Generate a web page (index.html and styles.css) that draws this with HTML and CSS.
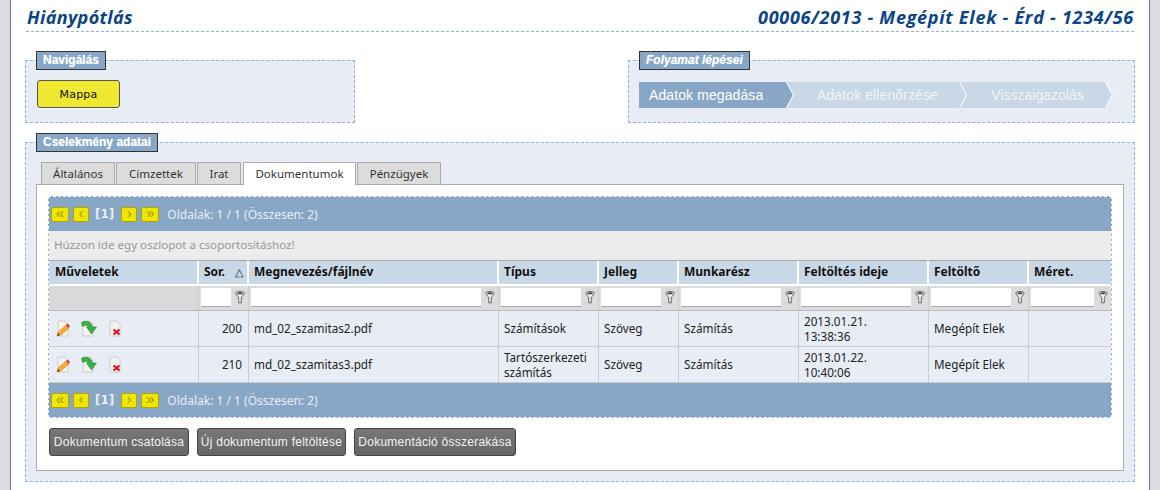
FILE: index.html
```html
<!DOCTYPE html>
<html lang="hu">
<head>
<meta charset="utf-8">
<title>Hiánypótlás</title>
<link rel="stylesheet" href="styles.css">
</head>
<body>
<svg class="defs" width="0" height="0" aria-hidden="true">
  <symbol id="funnel" viewBox="0 0 10 13">
    <path d="M.8 2.200C.8 1 3 .5 5 .5s4.200.5 4.200 1.700L6.300 6.500v5.300L3.700 11.800V6.500z" fill="#f4f4f4" stroke="#555" stroke-width=".9"/>
    <ellipse cx="5" cy="2.300" rx="2.800" ry="1.100" fill="#444"/>
  </symbol>
  <symbol id="edit" viewBox="0 0 16 17">
    <path d="M3 1h7l3 3v12H3z" fill="#f2f2ef" stroke="#c6c6c2" stroke-width=".8"/>
    <path d="M2 16l1-4 8-7 3 3-8 7z" fill="#f2ac34" stroke="#d88818" stroke-width=".5"/>
    <path d="M11 5l1.500-1.500 2.500 2.500L13.500 8z" fill="#e03040"/>
    <path d="M2 16l1-3 2 2z" fill="#5a4020"/>
  </symbol>
  <symbol id="move" viewBox="0 0 16 17">
    <path d="M2 1h7l3 3v12H2z" fill="#f2f2ef" stroke="#c6c6c2" stroke-width=".8"/>
    <path d="M.5 2.500C5 0 10.500 1.500 11.500 7H15.500L10.500 14 5.500 7H7.500C7 5.500 4.500 4.800 1.500 6.500z" fill="#3cb043" stroke="#1f7a28" stroke-width=".5"/>
  </symbol>
  <symbol id="del" viewBox="0 0 16 17">
    <path d="M3 1h7l3 3v12H3z" fill="#f2f2ef" stroke="#c6c6c2" stroke-width=".8"/>
    <path d="M6.500 9.500l6 5m0-5l-6 5" stroke="#e01020" stroke-width="2.200" fill="none"/>
  </symbol>
  <symbol id="step-arrow" viewBox="0 0 8 26" preserveAspectRatio="none">
    <path d="M0 0L7 13 0 26z" fill="currentColor"/>
    <path d="M.5 0L7.500 13 .5 26" fill="none" stroke="#fff" stroke-width="1"/>
  </symbol>
</svg>
<div class="page">
  <header class="head">
    <h1 class="title title-l">Hiánypótlás</h1>
    <h2 class="title title-r">00006/2013 - Megépít Elek - Érd - 1234/56</h2>
  </header>
  <div class="toprow">
    <section class="box box-nav">
      <div class="legend">Navigálás</div>
      <div class="nav-body"><button class="btn-yellow">Mappa</button></div>
    </section>
    <section class="box box-steps">
      <div class="legend legend-i">Folyamat lépései</div>
      <div class="steps">
        <div class="step step-active">Adatok megadása<svg class="chev"><use href="#step-arrow"/></svg></div>
        <div class="step step-two">Adatok ellenőrzése<svg class="chev"><use href="#step-arrow"/></svg></div>
        <div class="step step-three">Visszaigazolás<svg class="chev"><use href="#step-arrow"/></svg></div>
      </div>
    </section>
  </div>
  <section class="box box-main">
    <div class="legend">Cselekmény adatai</div>
    <div class="tabs">
      <div class="tab t1">Általános</div>
      <div class="tab t2">Címzettek</div>
      <div class="tab t3">Irat</div>
      <div class="tab t4 tab-active">Dokumentumok</div>
      <div class="tab t5">Pénzügyek</div>
    </div>
    <div class="panel">
      <div class="grid">
        <div class="pager">
          <span class="pg pg-w">«</span><span class="pg">‹</span><b class="cur">[1]</b><span class="pg">›</span><span class="pg pg-w">»</span>
          <span class="pinfo">Oldalak: 1 / 1 (Összesen: 2)</span>
        </div>
        <div class="group">Húzzon ide egy oszlopot a csoportosításhoz!</div>
        <table class="tbl">
          <colgroup>
            <col class="c1"><col class="c2"><col class="c3"><col class="c4"><col class="c5"><col class="c6"><col class="c7"><col class="c8"><col class="c9">
          </colgroup>
          <thead>
            <tr class="hr">
              <th>Műveletek</th><th>Sor. <span class="sort">△</span></th><th>Megnevezés/fájlnév</th><th>Típus</th><th>Jelleg</th><th>Munkarész</th><th>Feltöltés ideje</th><th>Feltöltő</th><th>Méret.</th>
            </tr>
            <tr class="fr">
              <td class="f0"></td>
              <td><div class="ff"><span class="fi"></span><svg class="fn"><use href="#funnel"/></svg></div></td>
              <td><div class="ff"><span class="fi"></span><svg class="fn"><use href="#funnel"/></svg></div></td>
              <td><div class="ff"><span class="fi"></span><svg class="fn"><use href="#funnel"/></svg></div></td>
              <td><div class="ff"><span class="fi"></span><svg class="fn"><use href="#funnel"/></svg></div></td>
              <td><div class="ff"><span class="fi"></span><svg class="fn"><use href="#funnel"/></svg></div></td>
              <td><div class="ff"><span class="fi"></span><svg class="fn"><use href="#funnel"/></svg></div></td>
              <td><div class="ff"><span class="fi"></span><svg class="fn"><use href="#funnel"/></svg></div></td>
              <td><div class="ff"><span class="fi"></span><svg class="fn"><use href="#funnel"/></svg></div></td>
            </tr>
          </thead>
          <tbody>
            <tr class="dr">
              <td><div class="acts"><svg class="ic"><use href="#edit"/></svg><svg class="ic"><use href="#move"/></svg><svg class="ic"><use href="#del"/></svg></div></td>
              <td class="num">200</td><td>md_02_szamitas2.pdf</td><td>Számítások</td><td>Szöveg</td><td>Számítás</td><td>2013.01.21.<br>13:38:36</td><td>Megépít Elek</td><td></td>
            </tr>
            <tr class="dr">
              <td><div class="acts"><svg class="ic"><use href="#edit"/></svg><svg class="ic"><use href="#move"/></svg><svg class="ic"><use href="#del"/></svg></div></td>
              <td class="num">210</td><td>md_02_szamitas3.pdf</td><td>Tartószerkezeti<br>számítás</td><td>Szöveg</td><td>Számítás</td><td>2013.01.22.<br>10:40:06</td><td>Megépít Elek</td><td></td>
            </tr>
          </tbody>
        </table>
        <div class="pager">
          <span class="pg pg-w">«</span><span class="pg">‹</span><b class="cur">[1]</b><span class="pg">›</span><span class="pg pg-w">»</span>
          <span class="pinfo">Oldalak: 1 / 1 (Összesen: 2)</span>
        </div>
      </div>
      <div class="actions">
        <button class="btn-gray b1">Dokumentum csatolása</button>
        <button class="btn-gray b2">Új dokumentum feltöltése</button>
        <button class="btn-gray b3">Dokumentáció összerakása</button>
      </div>
    </div>
  </section>
</div>
</body>
</html>
```
FILE: styles.css
```css
* { box-sizing: border-box; }
html, body { margin: 0; padding: 0; height: 490px; overflow: hidden; }
body { background: #dcdce0; font: 11.7px "Noto Sans", sans-serif; color: #222; }
.defs { position: absolute; }
.page {
  margin-left: 10px; width: 1140px; height: 490px; background: #fff;
  border-left: 1px solid #5d7a9c; border-right: 1px solid #5d7a9c;
  padding: 0 14px;
}
.head {
  display: flex; justify-content: space-between; align-items: flex-end;
  height: 32px; margin: 0 1px 0 1px; padding: 0 0 2px 1px;
  border-bottom: 1px dashed #8fb3d6;
}
.title { margin: 0; font: italic bold 18px/24px "Open Sans", sans-serif; color: #0a4488; }
.title-l { letter-spacing: .35px; }
.title-r { letter-spacing: .72px; }
.toprow { display: flex; justify-content: space-between; margin-top: 28px; }
.box { border: 1px dashed #8fb3d6; background: #e8edf5; padding: 0 10px; }
.box-nav { width: 330px; height: 63px; }
.box-steps { width: 507px; height: 63px; }
.box-main { margin-top: 19px; height: 340px; }
.legend {
  display: table; height: 19px; margin-top: -10px; padding: 0 6px;
  background: #88a7c6; border: 1px solid #333; color: #fff;
  font: bold 12px/17px "Liberation Sans", sans-serif; text-shadow: 0 0 1px #fff8;
}
.legend-i { font-style: italic; }
.nav-body { padding: 10px 0 0 1px; }
.btn-yellow {
  display: block; width: 83px; height: 28px; padding: 0;
  background: #f0e830; border: 1px solid #555; border-radius: 3px; box-shadow: 0 1px 0 #fff;
  font: 11px "DejaVu Sans", sans-serif; letter-spacing: .2px; color: #111;
}
.steps { display: flex; margin-top: 12px; height: 26px; color: #fff; font: 14px/26px "Liberation Sans", sans-serif; letter-spacing: .1px; }
.step { position: relative; height: 26px; background: #c9d7e6; color: #f0f4f8; text-align: center; }
.step-active { width: 147px; background: #88a7c6; color: #fff; text-align: left; padding-left: 10px; z-index: 2; }
.step-two { width: 173px; z-index: 1; padding-left: 10px; }
.step-three { width: 146px; padding-left: 11px; letter-spacing: 0; }
.chev { position: absolute; top: 0; left: 100%; width: 8px; height: 26px; color: #c9d7e6; }
.step-active .chev { color: #88a7c6; }
.tabs { display: flex; gap: 1px; margin: 10px 0 0 5px; height: 22px; position: relative; z-index: 1; font-size: 11.5px; }
.tab {
  height: 22px; background: #dcdcdc; border: 1px solid #aaa; border-bottom: 0;
  text-align: center; line-height: 21px; color: #333;
}
.tab-active { height: 23px; background: #fff; }
.t1 { width: 74px; } .t2 { width: 80px; } .t3 { width: 44px; } .t4 { width: 113px; margin-left: 1px; } .t5 { width: 84px; }
.panel { height: 287px; background: #fff; border: 1px solid #aaa; padding: 11px 11px 0; }
.grid { width: 1064px; background: #88a7c6; border: 1px dashed #fff; }
.pager { display: flex; align-items: center; height: 34px; padding-left: 2px; color: #e8edf5; }
.pg {
  display: flex; align-items: center; justify-content: center;
  width: 16px; height: 15px; margin-right: 4px; background: #eee600; border: 1px solid #b3a400; border-radius: 2px;
  color: #a89400; font: 15px/12px "Liberation Sans", sans-serif; padding-bottom: 2px;
}
.pg-w { width: 18px; }
.cur { margin: 0 7px 0 2px; font: bold 12px "DejaVu Sans", sans-serif; }
.pinfo { margin-left: 4px; font-size: 12px; }
.group { height: 30px; background: #ececec; border-bottom: 1px solid #aaa; padding-left: 5px; color: #999; line-height: 28px; font-size: 11.6px; }
.tbl { width: 1062px; table-layout: fixed; border-collapse: separate; border-spacing: 0; background: #e8edf5; }
.c1 { width: 150px; } .c2 { width: 50px; } .c3 { width: 250px; } .c4 { width: 100px; } .c5 { width: 80px; }
.c6 { width: 120px; } .c7 { width: 130px; } .c8 { width: 100px; } .c9 { width: 82px; }
.hr th {
  height: 25px; padding: 0 0 2px 5px; background: #c9d8e7; text-align: left; color: #111; font-weight: 700; font-size: 12px;
  border-right: 2px solid #fff; border-bottom: 2px solid #fff; white-space: nowrap;
}
.hr th:first-child { padding-left: 6px; }
.hr th:last-child { border-right: 0; }
.sort { font-weight: 400; font-size: 11px; margin-left: 7px; color: #222; }
.fr td { height: 25px; padding: 2px 0 0 2px; background: #dcdcdc; border-right: 1px solid #ccc; border-bottom: 1px solid #bbb; vertical-align: top; }
.fr td:last-child { border-right: 0; }
.fr .f0 { background: #d9d9d9; }
.ff { display: flex; align-items: flex-start; gap: 4px; }
.fi { flex: 1; height: 19px; background: #fff; border-bottom: 1px solid #aaa; }
.fn { flex: none; width: 10px; height: 13px; margin: 3px 3px 0 0; }
.dr td { height: 36px; padding: 0 5px; color: #222; line-height: 15px; border-right: 1px solid #ccc; border-bottom: 1px solid #ccc; }
.dr td:last-child { border-right: 0; }
.dr .num { text-align: right; padding-right: 6px; }
.acts { display: flex; gap: 10px; padding-left: 1px; }
.ic { width: 16px; height: 17px; }
.actions { display: flex; gap: 8px; margin: 10px 0 0 1px; }
.btn-gray {
  height: 28px; padding: 0; color: #f2f2f2; white-space: nowrap;
  background: linear-gradient(#777, #666); border: 1px solid #444; border-radius: 3px;
  font: 12px "Liberation Sans", sans-serif; letter-spacing: .25px;
}
.b1 { width: 140px; } .b2 { width: 149px; } .b3 { width: 162px; }
```
